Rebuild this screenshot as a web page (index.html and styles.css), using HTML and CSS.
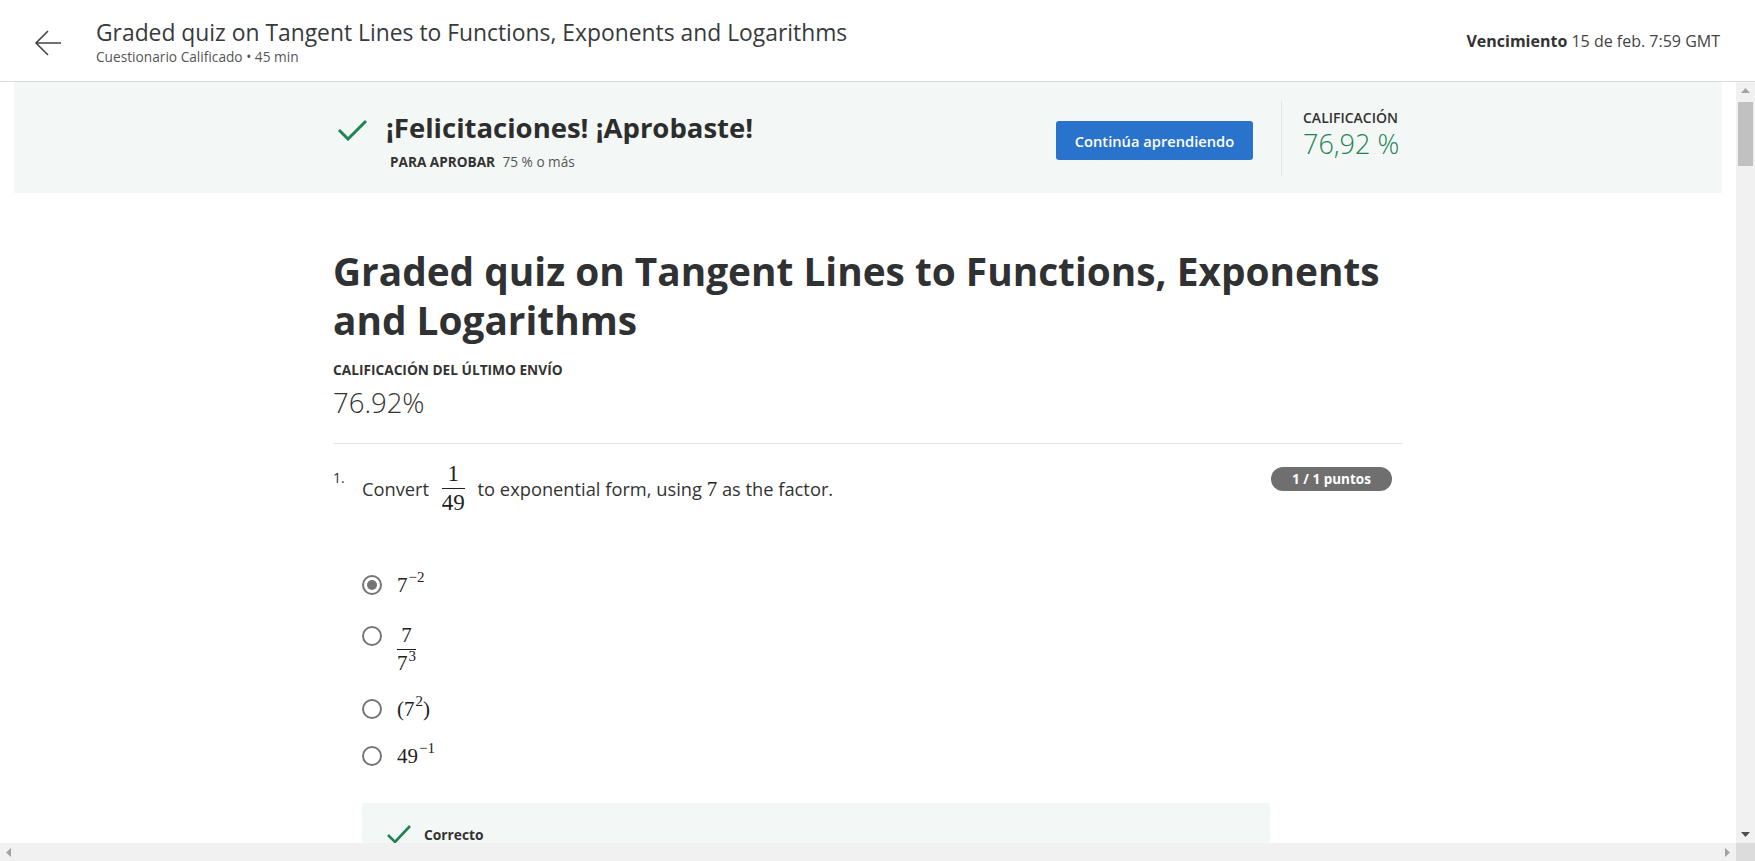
FILE: index.html
```html
<!DOCTYPE html>
<html lang="es">
<head>
<meta charset="utf-8">
<title>Graded quiz</title>
<link rel="stylesheet" href="styles.css">
</head>
<body>
<div class="app">
  <header class="topbar">
    <div class="back">
      <svg width="28" height="26" viewBox="0 0 28 26"><path d="M27 13H2M14 1L2 13l12 12" fill="none" stroke="#444" stroke-width="1.6"/></svg>
    </div>
    <div class="titles">
      <div class="top-title">Graded quiz on Tangent Lines to Functions, Exponents and Logarithms</div>
      <div class="top-sub">Cuestionario Calificado • 45 min</div>
    </div>
    <div class="due"><b>Vencimiento</b> 15 de feb. 7:59 GMT</div>
  </header>
  <div class="viewport">
    <div class="scroll">
      <section class="banner">
        <div class="container banner-inner">
          <div class="pass">
            <div class="pass-head">
              <svg class="pass-check" width="31" height="22" viewBox="0 0 31 22"><path d="M2 11l9 9L29 2" fill="none" stroke="#1f8354" stroke-width="3"/></svg>
              <h2>¡Felicitaciones! ¡Aprobaste!</h2>
            </div>
            <div class="pass-sub"><b>PARA APROBAR</b> 75 % o más</div>
          </div>
          <button class="btn">Continúa aprendiendo</button>
          <div class="vdiv"></div>
          <div class="grade">
            <div class="grade-label">CALIFICACIÓN</div>
            <div class="grade-value">76,92 %</div>
          </div>
        </div>
      </section>
      <main class="container content">
        <h1 class="quiz-title">Graded quiz on Tangent Lines to Functions, Exponents and Logarithms</h1>
        <div class="last-label">CALIFICACIÓN DEL ÚLTIMO ENVÍO</div>
        <div class="last-value">76.92%</div>
        <hr class="sep">
        <div class="question">
          <div class="qnum">1.</div>
          <div class="qbody">
            <div class="qtext">Convert <span class="frac"><span class="num">1</span><span class="den">49</span></span> to exponential form, using <span class="m">7</span> as the factor.</div>
            <div class="options">
              <div class="opt opt1"><span class="radio checked"></span><span class="math"><span>7</span><span class="sup">−2</span></span></div>
              <div class="opt"><span class="radio"></span><span class="math frac big"><span class="num">7</span><span class="den"><span>7</span><span class="sup">3</span></span></span></div>
              <div class="opt"><span class="radio"></span><span class="math"><span>(7</span><span class="sup">2</span><span>)</span></span></div>
              <div class="opt"><span class="radio"></span><span class="math"><span>49</span><span class="sup">−1</span></span></div>
            </div>
            <div class="feedback">
              <svg width="26" height="19" viewBox="0 0 26 19"><path d="M2 10l7 7L24 1" fill="none" stroke="#1f8354" stroke-width="2.6"/></svg>
              <span class="fb-text">Correcto</span>
            </div>
          </div>
          <div class="badge">1 / 1 puntos</div>
        </div>
      </main>
    </div>
    <div class="vbar">
      <div class="arrow-btn"><svg width="9" height="5" viewBox="0 0 9 5"><path d="M0 5L4.5 0L9 5Z" fill="#a3a3a3"/></svg></div>
      <div class="vtrack"><div class="vthumb"></div></div>
      <div class="arrow-btn"><svg width="9" height="5" viewBox="0 0 9 5"><path d="M0 0L4.5 5L9 0Z" fill="#505050"/></svg></div>
    </div>
    <div class="hbar">
      <div class="arrow-btn h"><svg width="5" height="9" viewBox="0 0 5 9"><path d="M5 0L0 4.5L5 9Z" fill="#a3a3a3"/></svg></div>
      <div class="htrack"></div>
      <div class="arrow-btn h"><svg width="5" height="9" viewBox="0 0 5 9"><path d="M0 0L5 4.5L0 9Z" fill="#a3a3a3"/></svg></div>
    </div>
    <div class="corner"></div>
  </div>
</div>
</body>
</html>
```
FILE: styles.css
```css
* { box-sizing: border-box; }
html, body { margin: 0; height: 100%; }
body {
  overflow: hidden;
  font-family: "Open Sans", "Liberation Sans", sans-serif;
  color: #333;
  background: #fff;
}
.app { height: 100vh; display: flex; flex-direction: column; }

.topbar {
  height: 82px;
  flex: 0 0 82px;
  border-bottom: 1px solid #d9d9d9;
  display: flex;
  align-items: center;
  padding: 0 35px 0 34px;
}
.back { width: 28px; height: 26px; display: flex; margin-top: 4px; }
.titles { margin-left: 34px; flex: 1; padding-top: 2px; }
.top-title { font-size: 22.85px; line-height: 29px; color: #373a3c; }
.top-sub { font-size: 13.7px; line-height: 18px; color: #555; margin-top: 1px; }
.due { font-size: 16px; color: #444; }
.due b { color: #333; font-weight: 700; }

.viewport {
  flex: 1;
  min-height: 0;
  display: grid;
  grid-template-columns: 1fr 19px;
  grid-template-rows: 1fr 18px;
}
.scroll { overflow: hidden; min-width: 0; }

.container { width: 1070px; margin: 0 auto; }

.banner { margin: 0 14px; background: #f3f8f6; height: 111px; padding: 19px 0 17px; }
.banner-inner { display: flex; align-items: flex-start; height: 75px; }
.pass { flex: 1; padding-top: 11px; }
.pass-head { display: flex; align-items: flex-start; height: 32px; }
.pass-check { margin: 7px 0 0 4px; }
.pass-head h2 { margin: 0 0 0 18px; font-size: 27.5px; line-height: 32px; font-weight: 700; color: #2d2d2d; }
.pass-sub { margin: 9px 0 0 57px; font-size: 13.6px; line-height: 18px; color: #555; }
.pass-sub b { color: #333; margin-right: 4px; }
.btn {
  align-self: center;
  margin-top: 4px;
  width: 197px;
  height: 39px;
  border: 0;
  border-radius: 3px;
  background: #2a73cc;
  color: #fff;
  font-family: inherit;
  font-size: 14.7px;
  font-weight: 600;
}
.vdiv { width: 1px; height: 75px; background: #dfe5e2; margin-left: 28px; }
.grade { width: 100px; padding-left: 21px; box-sizing: content-box; }
.grade-label { margin-top: 8px; font-size: 14px; line-height: 18px; font-weight: 600; color: #333; }
.grade-value { font-size: 27px; line-height: 34px; color: #1f8354; font-weight: 300; }

.quiz-title {
  margin: 54px 0 0;
  font-size: 38.8px;
  line-height: 49px;
  font-weight: 700;
  color: #2f3132;
}
.last-label { margin-top: 16px; font-size: 13.7px; line-height: 18px; font-weight: 700; color: #333; }
.last-value { margin-top: 7px; font-size: 27.5px; line-height: 34px; color: #333; font-weight: 300; }
.sep { margin: 23px 0 0; border: 0; border-top: 1px solid #e3e3e3; }

.question { display: flex; align-items: flex-start; padding-top: 23px; }
.qnum { width: 29px; font-size: 14px; line-height: 18px; padding-top: 2px; color: #333; }
.qbody { flex: 1; }
.qtext { font-size: 18.3px; line-height: 22px; color: #333; display: flex; align-items: center; white-space: pre; margin-top: -4px; }
.frac {
  display: inline-flex;
  flex-direction: column;
  align-items: center;
  font-family: "Liberation Serif", "DejaVu Serif", serif;
  font-size: 23px;
  line-height: 22px;
  margin: 0 8px;
  color: #222;
}
.frac .num { padding: 0 2px 3px; border-bottom: 1.5px solid #222; width: 100%; text-align: center; }
.frac .den { padding-top: 3px; }
.m { font-family: "Liberation Serif", serif; font-size: 21px; color: #222; }

.options { margin-top: 59px; display: flex; flex-direction: column; gap: 23px; }
.opt { display: flex; align-items: flex-start; }
.opt1 { min-height: 28px; }
.radio {
  flex: 0 0 20px;
  width: 20px; height: 20px;
  border: 2px solid #757575;
  border-radius: 50%;
  margin-top: 2px;
  margin-right: 15px;
  display: flex; align-items: center; justify-content: center;
}
.radio.checked::after { content: ""; width: 10px; height: 10px; border-radius: 50%; background: #757575; }
.math { font-family: "Liberation Serif", "DejaVu Serif", serif; font-size: 21px; line-height: 24px; color: #222; display: inline-flex; align-items: flex-start; }
.math .sup { font-size: 15px; line-height: 15px; margin: -3px 0 0 1px; }
.math.frac { margin: 0; flex-direction: column; align-items: center; }
.math.frac.big { line-height: 22px; font-size: 21px; }
.math.frac.big .num { padding: 0 2px 3px; }
.math.frac.big .den { padding-top: 2px; display: flex; align-items: flex-start; }

.feedback {
  margin-top: 35px;
  width: 908px;
  height: 80px;
  background: #f3f8f6;
  padding: 22px 0 0 24px;
  display: flex;
  align-items: flex-start;
}
.fb-text { margin: 3px 0 0 12px; font-size: 13.8px; line-height: 14px; font-weight: 700; color: #333; }

.badge {
  margin-right: 11px;
  width: 121px;
  height: 24px;
  border-radius: 12px;
  background: #6f6f6f;
  color: #fff;
  font-size: 13.5px;
  font-weight: 700;
  display: flex; align-items: center; justify-content: center;
}

.vbar { grid-row: 1; grid-column: 2; background: #f1f1f1; display: flex; flex-direction: column; }
.arrow-btn { height: 17px; display: flex; align-items: center; justify-content: center; flex: 0 0 17px; }
.arrow-btn.h { width: 17px; height: 18px; }
.vtrack { flex: 1; padding: 3px 2px 0 2px; }
.vthumb { height: 64px; background: #c1c1c1; }
.hbar { grid-row: 2; grid-column: 1; background: #f1f1f1; display: flex; }
.htrack { flex: 1; }
.corner { grid-row: 2; grid-column: 2; background: #dcdcdc; }
```
